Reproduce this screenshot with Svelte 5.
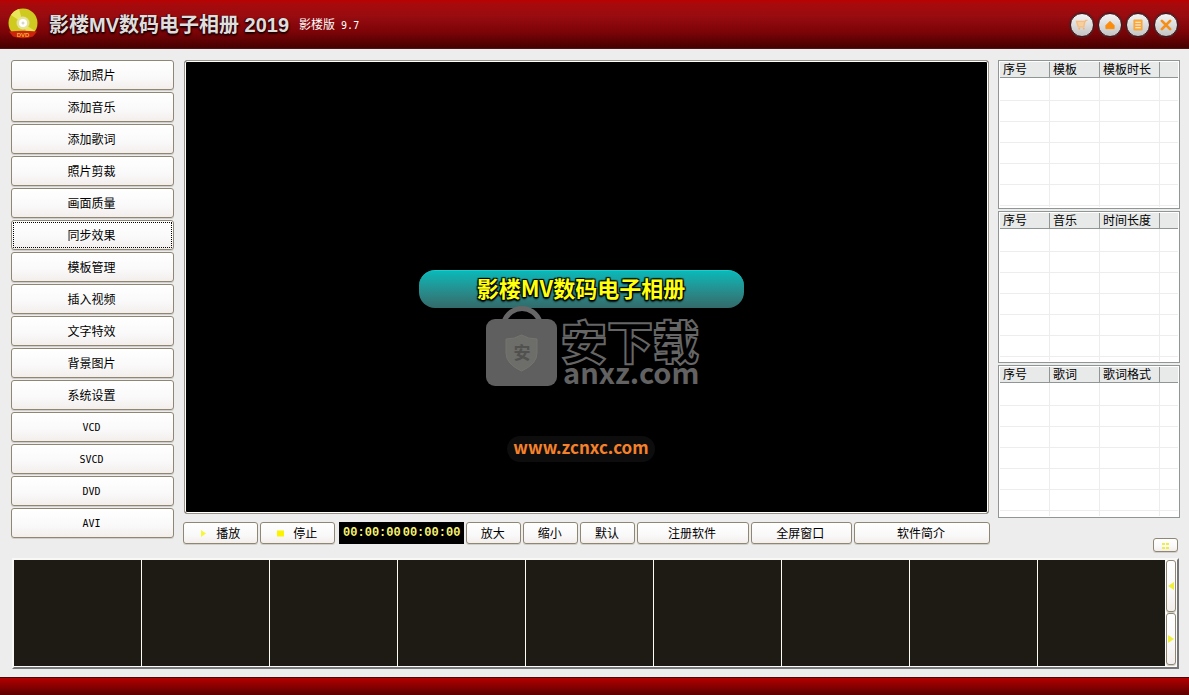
<script>
  const actions = [
    '添加照片', '添加音乐', '添加歌词', '照片剪裁', '画面质量',
    '同步效果', '模板管理', '插入视频', '文字特效', '背景图片',
    '系统设置', 'VCD', 'SVCD', 'DVD', 'AVI',
  ]
  const lists = [
    { name: '模板列表', columns: ['序号', '模板', '模板时长'] },
    { name: '音乐列表', columns: ['序号', '音乐', '时间长度'] },
    { name: '歌词列表', columns: ['序号', '歌词', '歌词格式'] },
  ]
  const rows = Array(6)
  const frames = Array(9)

  let selected = $state('同步效果')

  const isLatin = label => /^[A-Z]+$/.test(label)
</script>

<div class="app">
  <header>
    <svg class="logo" viewBox="0 0 32 32" aria-hidden="true">
      <circle cx="16" cy="15" r="14.500" fill="#cfca20" />
      <path d="M16 15 4 7A14.500 14.500 0 0 1 12 1Z" fill="#e9e55a" />
      <path d="M16 15 28 23A14.500 14.500 0 0 1 21 28.500Z" fill="#e9e55a" />
      <circle cx="16" cy="15" r="6.500" fill="#e6e29a" />
      <circle cx="16" cy="15" r="4" fill="#fff" />
      <circle cx="16" cy="15" r="1.500" fill="#d8d8c8" />
      <path d="M2 23.500Q16 22 30 23.500L26 28.500Q16 32 6 28.500Z" fill="#cc240c" />
      <text x="16" y="29" text-anchor="middle" font-size="6" font-weight="bold" fill="#f5b030">DVD</text>
    </svg>
    <h1>影楼MV数码电子相册 2019</h1>
    <p class="edition">影楼版<span class="latin">&nbsp;9.7</span></p>
    <div class="window-buttons">
      <button aria-label="购买">
        <svg viewBox="0 0 24 24">
          <path d="M6 8h9l-1 6H8ZM15 9l1-2h2" fill="#f8cf9c" stroke="#f6bd80" stroke-width="1.500" />
          <circle cx="9" cy="16" r="1" fill="#f3b26a" /><circle cx="14" cy="16" r="1" fill="#f3b26a" />
        </svg>
      </button>
      <button aria-label="主页">
        <svg viewBox="0 0 24 24"><path d="M12 8 16.500 12.500V16h-9v-3.500Z" fill="#fb8c0c" stroke="#fb8c0c" stroke-linejoin="round" /></svg>
      </button>
      <button aria-label="菜单">
        <svg viewBox="0 0 24 24">
          <rect x="7" y="6" width="10" height="12" rx="1" fill="#f8a73a" />
          <path d="M9 9h6M9 12h6M9 15h6" stroke="#fff" stroke-width="1" />
        </svg>
      </button>
      <button aria-label="关闭">
        <svg viewBox="0 0 24 24"><path d="m7.500 7.500 9 9m0-9-9 9" stroke="#f58f1c" stroke-width="3" stroke-linecap="round" /></svg>
      </button>
    </div>
  </header>

  <main>
    <nav>
      {#each actions as label}
        <button
          class="btn action"
          class:latin={isLatin(label)}
          class:selected={selected === label}
          onclick={() => (selected = label)}
        >{label}</button>
      {/each}
    </nav>

    <section class="center">
      <div class="preview">
        <div class="banner">影楼MV数码电子相册</div>
        <div class="site">www.zcnxc.com</div>
        <svg class="watermark" viewBox="0 0 224 96" role="img" aria-label="安下载 anxz.com">
          <path d="M18 16C24-2 48-2 54 16" fill="none" stroke="#666" stroke-width="5" />
          <rect x="0" y="13" width="71" height="67" rx="9" fill="#5f5f5f" />
          <path d="M35.500 29Q42 33 51 33V47Q51 58 35.500 65Q20 58 20 47V33Q29 33 35.500 29Z" fill="#6d6d69" stroke="#757570" />
          <text x="36" y="53" text-anchor="middle" font-size="17" font-weight="bold" fill="#51514f">安</text>
          <text class="outline" x="75" y="53" font-size="46">安下载</text>
          <text class="domain" x="77" y="78" font-size="29">anxz.com</text>
        </svg>
      </div>

      <div class="toolbar">
        <button class="btn w75">
          <svg width="9" height="9" viewBox="0 0 9 9" aria-hidden="true"><path d="M2 1v7l5-3.500Z" fill="#f6f63c" /></svg>
          播放
        </button>
        <button class="btn w75">
          <svg width="9" height="9" viewBox="0 0 9 9" aria-hidden="true"><path d="M1 1.500h7v6H1Z" fill="#fbf300" /></svg>
          停止
        </button>
        <div class="clock"><span>00:00:00</span><span>00:00:00</span></div>
        <button class="btn w55">放大</button>
        <button class="btn w55">缩小</button>
        <button class="btn w55">默认</button>
        <button class="btn w111">注册软件</button>
        <button class="btn w101">全屏窗口</button>
        <button class="btn w136">软件简介</button>
      </div>
    </section>

    <aside>
      <div class="lists">
        {#each lists as list}
          <div class="list">
            <table aria-label={list.name}>
              <thead>
                <tr>
                  {#each list.columns as column}
                    <th scope="col">{column}</th>
                  {/each}
                  <td></td>
                </tr>
              </thead>
              <tbody>
                {#each rows as _}
                  <tr><td></td><td></td><td></td><td></td></tr>
                {/each}
                <tr class="rest"><td></td><td></td><td></td><td></td></tr>
              </tbody>
            </table>
          </div>
        {/each}
      </div>
      <button class="btn grid-toggle" aria-label="缩略图">
        <svg width="9" height="7" viewBox="0 0 9 7" aria-hidden="true">
          <path d="M1 1h3v2H1ZM5 1h3v2H5ZM1 5h3v2H1ZM5 5h3v2H5Z" fill="#eeee3c" />
        </svg>
      </button>
    </aside>
  </main>

  <section class="strip">
    <div class="frames">
      {#each frames as _}
        <div class="frame"></div>
      {/each}
    </div>
    <div class="scroll">
      <button class="btn" aria-label="向前">
        <svg width="6" height="8" viewBox="0 0 6 8"><path d="M6 0v8L0 4Z" fill="#f0f03c" /></svg>
      </button>
      <button class="btn" aria-label="向后">
        <svg width="6" height="8" viewBox="0 0 6 8"><path d="M0 0v8l6-4Z" fill="#f0f03c" /></svg>
      </button>
    </div>
  </section>

  <footer></footer>
</div>

<style>
  :global(body) {
    margin: 0;
    background: #ededed;
  }

  .app {
    display: flex;
    flex-direction: column;
    min-height: 100vh;
    background: #ededed;
    color: #000;
    font: 12px/16px "Liberation Sans", "Noto Sans CJK SC", sans-serif;
  }

  header {
    display: flex;
    align-items: center;
    box-sizing: border-box;
    height: 49px;
    padding: 0 11px 0 7px;
    border-bottom: 1px solid #4c1414;
    background: linear-gradient(#bb0000, #a80a0c 4px, #980c10 16px, #7c0407 32px, #460000);
    color: #fff;
  }

  .logo {
    width: 32px;
    height: 32px;
  }

  h1 {
    margin: 0 10px;
    padding-top: 2px;
    color: #dedede;
    font-size: 20px;
    line-height: 28px;
    text-shadow: 1px 1px 1px #200, -1px 0 1px #400, 0 2px 2px #200;
  }

  .edition {
    margin: 0;
    padding-top: 2px;
  }

  .latin {
    font-family: "DejaVu Sans Mono", monospace;
    font-size: 10px;
  }

  .window-buttons {
    display: flex;
    gap: 4px;
    margin-left: auto;
    padding-top: 2px;
  }

  .window-buttons button {
    width: 24px;
    height: 24px;
    padding: 0;
    border: 1px solid #3c1a1c;
    border-radius: 50%;
    background: linear-gradient(#f4f4f4, #c4c4c4);
    box-shadow: 0 0 1px 1px #5a1a20;
  }

  .window-buttons svg {
    display: block;
    fill: none;
  }

  main {
    display: flex;
    flex: 1;
    padding: 11px 9px 0 11px;
  }

  .btn {
    box-sizing: border-box;
    padding: 0;
    border: 1px solid #8f8774;
    border-radius: 3px;
    background: linear-gradient(#fff, #faf9f9 60%, #f2eeec);
    box-shadow: 0 1px 0 #d2cfca;
    color: #000;
    font-family: inherit;
    font-size: 12px;
    line-height: 16px;
  }

  nav {
    display: flex;
    flex: 0 0 163px;
    flex-direction: column;
    gap: 2px;
  }

  .action {
    height: 30px;
    padding: 2px 2px 0 0;
  }

  .action.latin {
    font-family: "DejaVu Sans Mono", monospace;
    font-size: 10px;
  }

  .action.selected {
    outline: 1px dotted #000;
    outline-offset: -3px;
  }

  .center {
    display: flex;
    flex: 1;
    flex-direction: column;
    margin: 0 8px 8px 9px;
  }

  .preview {
    position: relative;
    display: grid;
    flex: 1;
    grid-template-rows: 208fr auto 127fr auto 51fr;
    justify-items: center;
    margin: 0 1px;
    padding-right: 11px;
    border: 1px solid #9a9488;
    border-radius: 3px;
    background: #000;
    box-shadow: inset 0 0 0 1px #fff;
  }

  .banner {
    grid-row: 2;
    box-sizing: border-box;
    width: 325px;
    height: 38px;
    border-top: 1px solid #14d0d0;
    border-radius: 16px;
    background: linear-gradient(#0cb8b8, #2a8888 60%, #336a6a);
    color: #ffff10;
    font: bold 22px/33px "Noto Sans CJK SC", sans-serif;
    text-align: center;
    text-shadow: 1px 1px 1px #000, -1px -1px 1px #000, 1px -1px 1px #000, -1px 1px 1px #000, 0 2px 2px #000;
  }

  .site {
    grid-row: 4;
    padding: 0 6px 4px;
    border-radius: 13px;
    background: #0d0d0d;
    color: #f5822a;
    font: bold 17px/22px "Noto Sans CJK SC", sans-serif;
  }

  .watermark {
    position: absolute;
    top: 245px;
    left: calc(50% - 101px);
    width: 224px;
    height: 96px;
    font-family: "Noto Sans CJK SC", sans-serif;
  }

  .outline {
    fill: #000;
    stroke: #666;
    stroke-width: 2px;
    font-weight: 900;
  }

  .domain {
    fill: #626262;
    font-weight: 600;
  }

  .toolbar {
    display: flex;
    gap: 2px;
    height: 22px;
    margin-top: 8px;
  }

  .toolbar .btn {
    padding: 2px 2px 0 0;
  }

  .toolbar .btn svg {
    margin-right: 5px;
  }

  .w75 { flex: 75 1 75px; }
  .w55 { flex: 55 1 55px; }
  .w101 { flex: 101 1 101px; }
  .w111 { flex: 111 1 111px; }
  .w136 { flex: 136 1 136px; }

  .clock {
    display: flex;
    flex: 0 0 125px;
    justify-content: center;
    align-items: center;
    gap: 2px;
    margin-left: 2px;
    background: #000;
    color: #f8f470;
    font: bold 12px/22px "Liberation Mono", monospace;
  }

  aside {
    display: flex;
    flex: 0 0 182px;
    flex-direction: column;
  }

  .lists {
    display: grid;
    flex: 1;
    grid-template-rows: 149fr 152fr 153fr;
    gap: 2px;
  }

  .list {
    box-sizing: border-box;
    padding: 1px;
    overflow: hidden;
    border: 1px solid #8f9694;
    background: #fff;
  }

  table {
    width: 100%;
    height: 100%;
    border-collapse: separate;
    border-spacing: 0;
    table-layout: fixed;
  }

  th,
  td {
    box-sizing: border-box;
    height: 21px;
    padding: 0;
    border-right: 1px solid #ededed;
    border-bottom: 1px solid #ededed;
  }

  thead th,
  thead td {
    width: 50px;
    height: 16px;
    padding: 2px 0 0 3px;
    border-right-color: #8f9694;
    border-bottom-color: #8f9694;
    background: #e8eaea;
    font-weight: normal;
    line-height: 13px;
    text-align: left;
    white-space: nowrap;
  }

  thead th:nth-child(3) {
    width: 60px;
  }

  thead td {
    width: auto;
  }

  tbody tr:first-child td {
    height: 23px;
  }

  tr > :last-child {
    border-right: 0;
  }

  .rest td {
    height: auto;
    border-bottom: 0;
  }

  .grid-toggle {
    display: flex;
    align-items: center;
    justify-content: center;
    align-self: flex-end;
    width: 25px;
    height: 14px;
    margin: 20px 2px 0 0;
  }

  .strip {
    display: flex;
    height: 107px;
    margin: 6px 10px 8px 12px;
    border: 2px solid #f8f8f6;
    border-right-color: #777;
    border-bottom-color: #777;
    background: #fbfbfa;
  }

  .frames {
    display: flex;
    flex: 1;
    gap: 1px;
    padding-bottom: 1px;
  }

  .frame {
    flex: 1;
    background: #1e1a14;
  }

  .scroll {
    display: flex;
    flex-direction: column;
    gap: 1px;
    padding: 0 1px 2px 1px;
  }

  .scroll .btn {
    display: flex;
    flex: 1;
    align-items: center;
    justify-content: center;
    width: 10px;
  }

  footer {
    box-sizing: border-box;
    height: 18px;
    border-top: 1px solid #4c0808;
    background: linear-gradient(#b40000, #5c0000);
  }
</style>
